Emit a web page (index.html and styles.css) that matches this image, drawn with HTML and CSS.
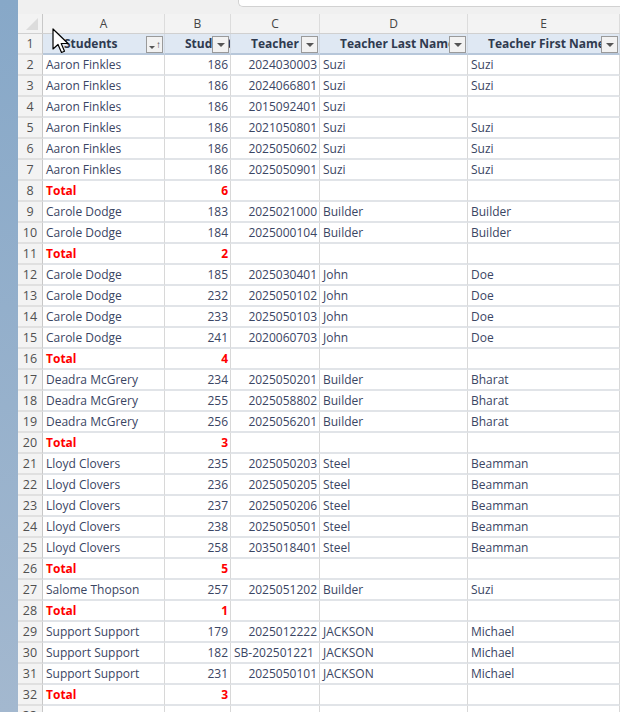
FILE: index.html
```html
<!DOCTYPE html>
<html>
<head>
<meta charset="utf-8">
<link rel="stylesheet" href="styles.css">
</head>
<body>
<div class="app">
  <div class="strip"></div>
  <div class="sheet">
    <div class="topbar"><div class="fbar"></div></div>
    <div class="colhead">
      <div class="corner"><span class="tri"></span></div>
      <div class="cl">A</div><div class="cl">B</div><div class="cl">C</div><div class="cl">D</div><div class="cl">E</div>
    </div>
    <div class="row hdr">
      <div class="rh">1</div>
      <div class="h ha"><span>Students</span><i class="fb sort"><b class="dn"></b><b class="up">↑</b></i></div>
      <div class="h"><span>Students</span><i class="fb"><b class="dn"></b></i></div>
      <div class="h"><span>Teacher</span><i class="fb"><b class="dn"></b></i></div>
      <div class="h"><span>Teacher Last Name</span><i class="fb"><b class="dn"></b></i></div>
      <div class="h"><span>Teacher First Name</span><i class="fb"><b class="dn"></b></i></div>
    </div>
    <div class="row"><div class="rh">2</div><div class="c">Aaron Finkles</div><div class="c n">186</div><div class="c n">2024030003</div><div class="c">Suzi</div><div class="c">Suzi</div></div>
    <div class="row"><div class="rh">3</div><div class="c">Aaron Finkles</div><div class="c n">186</div><div class="c n">2024066801</div><div class="c">Suzi</div><div class="c">Suzi</div></div>
    <div class="row"><div class="rh">4</div><div class="c">Aaron Finkles</div><div class="c n">186</div><div class="c n">2015092401</div><div class="c">Suzi</div><div class="c"></div></div>
    <div class="row"><div class="rh">5</div><div class="c">Aaron Finkles</div><div class="c n">186</div><div class="c n">2021050801</div><div class="c">Suzi</div><div class="c">Suzi</div></div>
    <div class="row"><div class="rh">6</div><div class="c">Aaron Finkles</div><div class="c n">186</div><div class="c n">2025050602</div><div class="c">Suzi</div><div class="c">Suzi</div></div>
    <div class="row"><div class="rh">7</div><div class="c">Aaron Finkles</div><div class="c n">186</div><div class="c n">2025050901</div><div class="c">Suzi</div><div class="c">Suzi</div></div>
    <div class="row tot"><div class="rh">8</div><div class="c">Total</div><div class="c n">6</div><div class="c"></div><div class="c"></div><div class="c"></div></div>
    <div class="row"><div class="rh">9</div><div class="c">Carole Dodge</div><div class="c n">183</div><div class="c n">2025021000</div><div class="c">Builder</div><div class="c">Builder</div></div>
    <div class="row"><div class="rh">10</div><div class="c">Carole Dodge</div><div class="c n">184</div><div class="c n">2025000104</div><div class="c">Builder</div><div class="c">Builder</div></div>
    <div class="row tot"><div class="rh">11</div><div class="c">Total</div><div class="c n">2</div><div class="c"></div><div class="c"></div><div class="c"></div></div>
    <div class="row"><div class="rh">12</div><div class="c">Carole Dodge</div><div class="c n">185</div><div class="c n">2025030401</div><div class="c">John</div><div class="c">Doe</div></div>
    <div class="row"><div class="rh">13</div><div class="c">Carole Dodge</div><div class="c n">232</div><div class="c n">2025050102</div><div class="c">John</div><div class="c">Doe</div></div>
    <div class="row"><div class="rh">14</div><div class="c">Carole Dodge</div><div class="c n">233</div><div class="c n">2025050103</div><div class="c">John</div><div class="c">Doe</div></div>
    <div class="row"><div class="rh">15</div><div class="c">Carole Dodge</div><div class="c n">241</div><div class="c n">2020060703</div><div class="c">John</div><div class="c">Doe</div></div>
    <div class="row tot"><div class="rh">16</div><div class="c">Total</div><div class="c n">4</div><div class="c"></div><div class="c"></div><div class="c"></div></div>
    <div class="row"><div class="rh">17</div><div class="c">Deadra McGrery</div><div class="c n">234</div><div class="c n">2025050201</div><div class="c">Builder</div><div class="c">Bharat</div></div>
    <div class="row"><div class="rh">18</div><div class="c">Deadra McGrery</div><div class="c n">255</div><div class="c n">2025058802</div><div class="c">Builder</div><div class="c">Bharat</div></div>
    <div class="row"><div class="rh">19</div><div class="c">Deadra McGrery</div><div class="c n">256</div><div class="c n">2025056201</div><div class="c">Builder</div><div class="c">Bharat</div></div>
    <div class="row tot"><div class="rh">20</div><div class="c">Total</div><div class="c n">3</div><div class="c"></div><div class="c"></div><div class="c"></div></div>
    <div class="row"><div class="rh">21</div><div class="c">Lloyd Clovers</div><div class="c n">235</div><div class="c n">2025050203</div><div class="c">Steel</div><div class="c">Beamman</div></div>
    <div class="row"><div class="rh">22</div><div class="c">Lloyd Clovers</div><div class="c n">236</div><div class="c n">2025050205</div><div class="c">Steel</div><div class="c">Beamman</div></div>
    <div class="row"><div class="rh">23</div><div class="c">Lloyd Clovers</div><div class="c n">237</div><div class="c n">2025050206</div><div class="c">Steel</div><div class="c">Beamman</div></div>
    <div class="row"><div class="rh">24</div><div class="c">Lloyd Clovers</div><div class="c n">238</div><div class="c n">2025050501</div><div class="c">Steel</div><div class="c">Beamman</div></div>
    <div class="row"><div class="rh">25</div><div class="c">Lloyd Clovers</div><div class="c n">258</div><div class="c n">2035018401</div><div class="c">Steel</div><div class="c">Beamman</div></div>
    <div class="row tot"><div class="rh">26</div><div class="c">Total</div><div class="c n">5</div><div class="c"></div><div class="c"></div><div class="c"></div></div>
    <div class="row"><div class="rh">27</div><div class="c">Salome Thopson</div><div class="c n">257</div><div class="c n">2025051202</div><div class="c">Builder</div><div class="c">Suzi</div></div>
    <div class="row tot"><div class="rh">28</div><div class="c">Total</div><div class="c n">1</div><div class="c"></div><div class="c"></div><div class="c"></div></div>
    <div class="row"><div class="rh">29</div><div class="c">Support Support</div><div class="c n">179</div><div class="c n">2025012222</div><div class="c">JACKSON</div><div class="c">Michael</div></div>
    <div class="row"><div class="rh">30</div><div class="c">Support Support</div><div class="c n">182</div><div class="c">SB-202501221</div><div class="c">JACKSON</div><div class="c">Michael</div></div>
    <div class="row"><div class="rh">31</div><div class="c">Support Support</div><div class="c n">231</div><div class="c n">2025050101</div><div class="c">JACKSON</div><div class="c">Michael</div></div>
    <div class="row tot"><div class="rh">32</div><div class="c">Total</div><div class="c n">3</div><div class="c"></div><div class="c"></div><div class="c"></div></div>
    <div class="row"><div class="rh">33</div><div class="c"></div><div class="c"></div><div class="c"></div><div class="c"></div><div class="c"></div></div>
  </div>
  <svg class="cursor" width="18" height="26" viewBox="0 0 18 26"><path d="M1 1 L1 21 L6 16.5 L9.5 24.5 L12.5 23.2 L9.2 15.5 L16 15.5 Z" fill="#fff" stroke="#000" stroke-width="1.2" stroke-linejoin="round"/></svg>
</div>
</body>
</html>
```
FILE: styles.css
```css
html, body { margin: 0; padding: 0; }
body { width: 620px; height: 712px; overflow: hidden; background: #f3f3f3; font-family: "Open Sans", "Noto Sans", sans-serif; }
.app { display: flex; height: 712px; position: relative; overflow: hidden; }
.strip { width: 18px; flex: none; background: linear-gradient(#87a8c8, #a3b8cf); }
.sheet { flex: 1; display: flex; flex-direction: column; background: #fff; min-height: 0; }
.sheet > * { flex: none; }
.topbar { height: 14px; background: #f0f0f0; display: flex; justify-content: flex-end; }
.fbar { width: 381px; height: 6px; background: #fff; border: 1px solid #d2d2d2; border-top: none; border-right: none; border-bottom-left-radius: 5px; }
.colhead, .row { display: grid; grid-template-columns: 25px 122px 66px 89px 148px 1fr; }
.colhead { height: 20px; background: #f3f3f3; border-bottom: 1px solid #d0d0d0; box-sizing: border-box; }
.cl { border-right: 1px solid #dcdcdc; font-size: 12px; color: #444; text-align: center; line-height: 19px; }
.corner { border-right: 1px solid #c8c8c8; position: relative; }
.tri { position: absolute; right: 4px; bottom: 3px; width: 0; height: 0; border-left: 12px solid transparent; border-bottom: 12px solid #dcdcdc; }
.row { height: 21px; box-sizing: border-box; }
.rh { background: #f3f3f3; border-right: 1px solid #c8c8c8; border-bottom: 2px solid #e0e0e0; font-size: 12.5px; color: #505050; text-align: center; line-height: 19px; }
.c { border-right: 1px solid #d8d8d8; border-bottom: 2px solid #e1e4e8; font-size: 12px; color: #3a4563; line-height: 19px; padding: 0 3px 0 3px; white-space: nowrap; overflow: hidden; }
.c.n { text-align: right; padding-right: 2px; }
.tot .c { color: #ff0000; font-weight: 700; }
.hdr .rh { border-bottom-color: #e0e0e0; }
.h { position: relative; background: #dfe8f3; border-right: 1px solid #d2dae4; border-bottom: 2px solid #b7c7da; font-size: 12px; font-weight: 700; color: #2f3a4f; line-height: 19px; white-space: nowrap; overflow: hidden; padding-left: 20px; }
.ha { padding-left: 21px; }
.fb { position: absolute; right: 1px; top: 2px; width: 15px; height: 15px; border: 1px solid #9a9a9a; background: #f2f2f2; display: flex; align-items: center; justify-content: center; }
.dn { width: 0; height: 0; border-left: 4px solid transparent; border-right: 4px solid transparent; border-top: 4px solid #555; }
.sort { justify-content: flex-start; gap: 1px; padding-left: 2px; box-sizing: content-box; width: 13px; }
.sort .dn { border-left-width: 3px; border-right-width: 3px; border-top-width: 3px; margin-top: 5px; }
.up { font-size: 10px; font-weight: 400; color: #444; line-height: 15px; font-style: normal; }
.cursor { position: absolute; left: 52px; top: 28px; }
```
